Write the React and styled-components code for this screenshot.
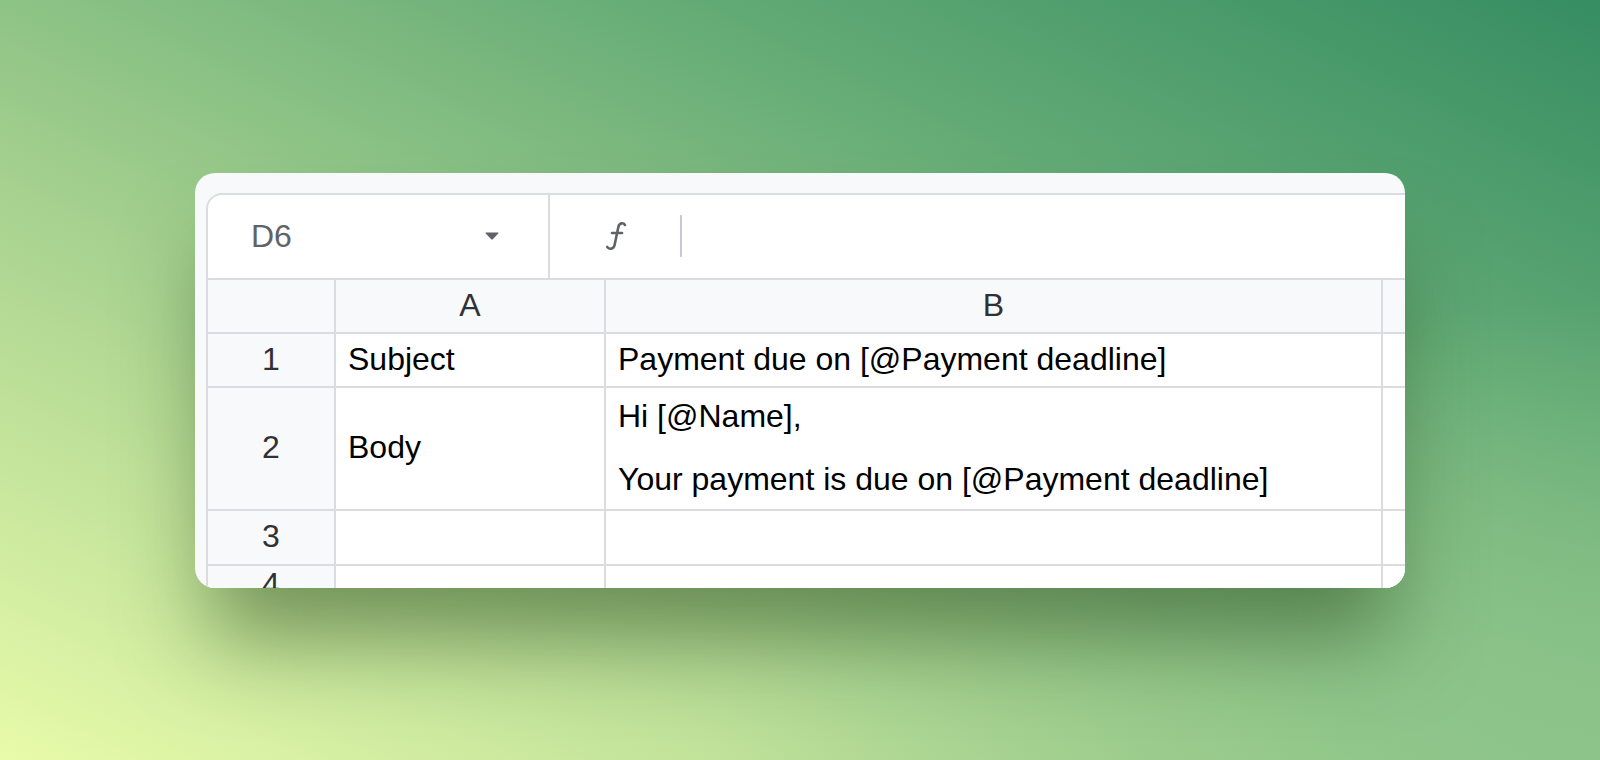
import React from "react";
import styled, { createGlobalStyle } from "styled-components";

const GlobalStyle = createGlobalStyle`
  html, body {
    margin: 0;
    padding: 0;
  }
  * {
    box-sizing: border-box;
  }
`;

const Page = styled.div`
  width: 100%;
  height: 760px;
  display: flex;
  align-items: center;
  justify-content: center;
  overflow: hidden;
  font-family: "Liberation Sans", Arial, sans-serif;
  background:
    radial-gradient(ellipse 55% 60% at 100% 100%, rgba(140, 196, 138, 0.9) 0%, rgba(140, 196, 138, 0) 100%),
    linear-gradient(to top right, #e8fbaa 0%, #a6d18f 38%, #62aa75 72%, #368d62 100%);
`;

const Card = styled.div`
  width: 1210px;
  height: 415px;
  border-radius: 20px;
  background: #f8f9fa;
  overflow: hidden;
  padding: 20px 0 0 11px;
  box-shadow: 0 65px 85px -14px rgba(35, 70, 25, 0.5);
`;

const Sheet = styled.div`
  width: calc(100% + 40px);
  background: #fff;
  border-top: 2px solid #dadce0;
  border-left: 2px solid #dadce0;
  border-top-left-radius: 16px;
  overflow: hidden;
`;

const FormulaBar = styled.div`
  display: flex;
  height: 85px;
  border-bottom: 2px solid #dadce0;
`;

const NameBox = styled.div`
  width: 342px;
  display: flex;
  align-items: center;
  padding: 0 49px 0 43px;
  border-right: 2px solid #dadce0;
  color: #5f6368;
  font-size: 32px;
`;

const Caret = styled.svg`
  margin-left: auto;
  width: 14px;
  height: 8px;
  fill: #5f6368;
`;

const FxArea = styled.div`
  display: flex;
  align-items: center;
  padding-left: 53px;
`;

const FxIcon = styled.svg`
  width: 26px;
  height: 34px;
  stroke: #5f6368;
  fill: none;
  stroke-width: 2.6;
  stroke-linecap: round;
`;

const Divider = styled.div`
  width: 2px;
  height: 42px;
  margin-left: 51px;
  background: #c7cacf;
`;

const Grid = styled.div`
  display: grid;
  grid-template-columns: 128px 270px 777px 200px;
  grid-template-rows: 54px 54px 123px 55px 40px;
`;

const Cell = styled.div`
  display: flex;
  flex-direction: column;
  justify-content: center;
  align-items: ${(p) => (p.$center ? "center" : "flex-start")};
  padding: 0 12px 2px;
  border-right: 2px solid #dadce0;
  border-bottom: 2px solid #dadce0;
  background: ${(p) => (p.$head ? "#f8f9fa" : "#fff")};
  color: ${(p) => (p.$head ? "#303134" : "#000")};
  font-size: 32px;
  line-height: 36px;
  white-space: nowrap;
  overflow: hidden;
`;

const Lines = styled.div`
  display: flex;
  flex-direction: column;
  gap: 27px;
`;

const rows = [
  { n: "1", a: "Subject", b: ["Payment due on [@Payment deadline]"] },
  { n: "2", a: "Body", b: ["Hi [@Name],", "Your payment is due on [@Payment deadline]"] },
  { n: "3", a: "", b: [] },
  { n: "4", a: "", b: [] },
];

export default function App() {
  return (
    <>
      <GlobalStyle />
      <Page>
        <Card>
          <Sheet>
            <FormulaBar>
              <NameBox>
                D6
                <Caret viewBox="0 0 14 8">
                  <path d="M1.2 0.5 H12.8 Q14 0.5 13.2 1.5 L7.8 7.2 Q7 8 6.2 7.2 L0.8 1.5 Q0 0.5 1.2 0.5 Z" />
                </Caret>
              </NameBox>
              <FxArea>
                <FxIcon viewBox="0 0 26 34">
                  <path d="M22 6 C20.4 3.4 16.4 3.6 15.4 7.8 L11.6 26 C10.6 30.4 6.4 30.6 4.2 28" />
                  <path d="M9 14 H19" />
                </FxIcon>
                <Divider />
              </FxArea>
            </FormulaBar>
            <Grid>
              <Cell $head $center />
              <Cell $head $center>A</Cell>
              <Cell $head $center>B</Cell>
              <Cell $head />
              {rows.map((r) => (
                <React.Fragment key={r.n}>
                  <Cell $head $center>{r.n}</Cell>
                  <Cell>{r.a}</Cell>
                  <Cell>
                    <Lines>
                      {r.b.map((line) => (
                        <span key={line}>{line}</span>
                      ))}
                    </Lines>
                  </Cell>
                  <Cell />
                </React.Fragment>
              ))}
            </Grid>
          </Sheet>
        </Card>
      </Page>
    </>
  );
}
